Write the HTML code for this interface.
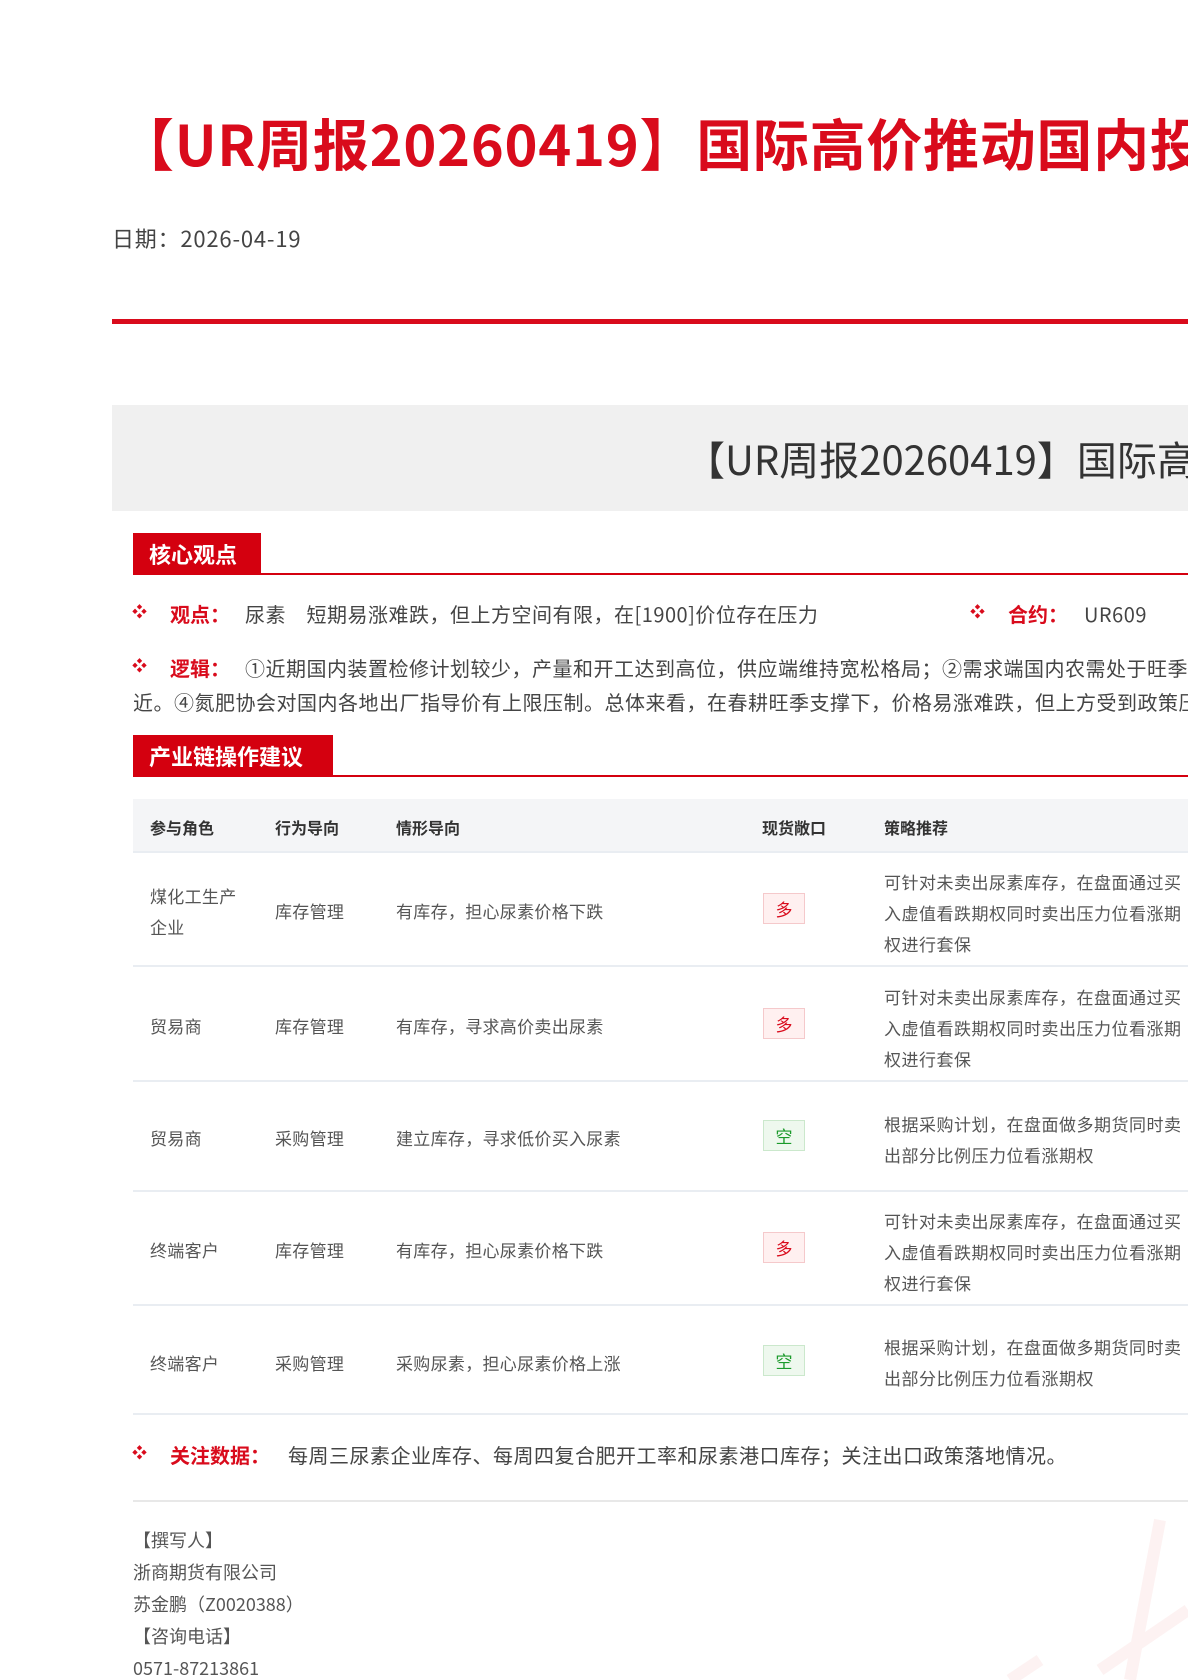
<!DOCTYPE html>
<html><head><meta charset="utf-8"><style>
*{margin:0;padding:0;box-sizing:border-box}
html,body{width:1188px;height:1680px;overflow:hidden;background:#fff}
body{position:relative;font-family:"Noto Sans CJK SC","Liberation Sans",sans-serif;color:#333}
.a{position:absolute;white-space:nowrap}
.red{color:#d90b1c}
.sec{position:absolute;left:133px;height:42px;background:#d4000f;color:#fff;font-weight:bold;font-size:22px;line-height:42px;padding-left:16px}
.secline{position:absolute;left:133px;right:0;height:2px;background:#d4000f}
.th{position:absolute;font-size:16px;font-weight:bold;color:#333;white-space:nowrap;line-height:18px}
.td{position:absolute;font-size:17px;color:#555;white-space:nowrap;line-height:20px;letter-spacing:0.3px}
.bd{position:absolute;left:133px;right:0;height:2px;background:#e9edf2}
.tag{position:absolute;left:763px;width:42px;height:31px;font-size:17px;text-align:center;line-height:29px}
.tr{background:#fff0f0;border:1px solid #f5c9cb;color:#d90b1c}
.tg{background:#eef8ee;border:1px solid #cbe8cc;color:#1a9a2a}
.st{position:absolute;left:884px;font-size:17px;color:#555;line-height:31px;width:300px;white-space:normal;word-break:break-all;letter-spacing:0.5px}
.bul{position:absolute;color:#d90b1c;font-size:15px;line-height:18px}
.lab{position:absolute;color:#d90b1c;font-weight:bold;font-size:20px;white-space:nowrap;line-height:23px}
.tx{position:absolute;font-size:20px;color:#444;white-space:nowrap;line-height:23px;letter-spacing:0.5px}
.w{position:absolute;left:133px;font-size:18px;color:#555;white-space:nowrap;line-height:21px}
</style></head><body>
<svg class="a" style="left:0;top:0" width="1188" height="1680"><g stroke="#fdf2f2" stroke-width="12" fill="none"><path d="M1160 1520 L1130 1680"/><path d="M1188 1610 L1100 1670"/><path d="M1040 1660 L1010 1680"/></g></svg>
<div class="a red" style="left:118px;top:108px;font-size:56px;font-weight:bold;line-height:70px;letter-spacing:0.7px">【UR周报20260419】国际高价推动国内投机情绪</div>
<div class="a" style="left:112px;top:223px;font-size:22px;color:#444;line-height:30px;letter-spacing:0.8px">日期：2026-04-19</div>
<div class="a" style="left:112px;top:319px;right:0;height:5px;background:#d90b1c"></div>
<div class="a" style="left:112px;top:405px;right:0;height:106px;background:#f0f0f0"></div>
<div class="a" style="left:685px;top:433px;font-size:40px;color:#333;line-height:50px">【UR周报20260419】国际高价推动国内投机情绪</div>

<div class="sec" style="top:533px;width:128px">核心观点</div>
<div class="secline" style="top:573px"></div>
<div class="bul" style="left:132px;top:603px">❖</div>
<div class="lab" style="left:170px;top:602px">观点：</div>
<div class="tx" style="left:245px;top:602px">尿素　短期易涨难跌，但上方空间有限，在[1900]价位存在压力</div>
<div class="bul" style="left:970px;top:603px">❖</div>
<div class="lab" style="left:1008px;top:602px">合约：</div>
<div class="tx" style="left:1084px;top:602px">UR609</div>
<div class="bul" style="left:132px;top:657px">❖</div>
<div class="lab" style="left:170px;top:656px">逻辑：</div>
<div class="tx" style="left:245px;top:656px">①近期国内装置检修计划较少，产量和开工达到高位，供应端维持宽松格局；②需求端国内农需处于旺季</div>
<div class="tx" style="left:133px;top:690px">近。④氮肥协会对国内各地出厂指导价有上限压制。总体来看，在春耕旺季支撑下，价格易涨难跌，但上方受到政策压制</div>

<div class="sec" style="top:735px;width:200px">产业链操作建议</div>
<div class="secline" style="top:775px"></div>

<div class="a" style="left:133px;top:799px;right:0;height:53px;background:#f4f5f7"></div>
<div class="bd" style="top:851px"></div>
<div class="th" style="left:150px;top:818px">参与角色</div>
<div class="th" style="left:275px;top:818px">行为导向</div>
<div class="th" style="left:396px;top:818px">情形导向</div>
<div class="th" style="left:762px;top:818px">现货敞口</div>
<div class="th" style="left:884px;top:818px">策略推荐</div>

<div class="td" style="left:150px;top:880px;line-height:31px;white-space:normal;width:100px">煤化工生产企业</div>
<div class="td" style="left:275px;top:901px">库存管理</div>
<div class="td" style="left:396px;top:901px">有库存，担心尿素价格下跌</div>
<div class="tag tr" style="top:893px">多</div>
<div class="st" style="top:866px">可针对未卖出尿素库存，在盘面通过买入虚值看跌期权同时卖出压力位看涨期权进行套保</div>
<div class="bd" style="top:965px"></div>

<div class="td" style="left:150px;top:1016px">贸易商</div>
<div class="td" style="left:275px;top:1016px">库存管理</div>
<div class="td" style="left:396px;top:1016px">有库存，寻求高价卖出尿素</div>
<div class="tag tr" style="top:1008px">多</div>
<div class="st" style="top:981px">可针对未卖出尿素库存，在盘面通过买入虚值看跌期权同时卖出压力位看涨期权进行套保</div>
<div class="bd" style="top:1080px"></div>

<div class="td" style="left:150px;top:1128px">贸易商</div>
<div class="td" style="left:275px;top:1128px">采购管理</div>
<div class="td" style="left:396px;top:1128px">建立库存，寻求低价买入尿素</div>
<div class="tag tg" style="top:1120px">空</div>
<div class="st" style="top:1108px">根据采购计划，在盘面做多期货同时卖出部分比例压力位看涨期权</div>
<div class="bd" style="top:1190px"></div>

<div class="td" style="left:150px;top:1240px">终端客户</div>
<div class="td" style="left:275px;top:1240px">库存管理</div>
<div class="td" style="left:396px;top:1240px">有库存，担心尿素价格下跌</div>
<div class="tag tr" style="top:1232px">多</div>
<div class="st" style="top:1205px">可针对未卖出尿素库存，在盘面通过买入虚值看跌期权同时卖出压力位看涨期权进行套保</div>
<div class="bd" style="top:1304px"></div>

<div class="td" style="left:150px;top:1353px">终端客户</div>
<div class="td" style="left:275px;top:1353px">采购管理</div>
<div class="td" style="left:396px;top:1353px">采购尿素，担心尿素价格上涨</div>
<div class="tag tg" style="top:1345px">空</div>
<div class="st" style="top:1331px">根据采购计划，在盘面做多期货同时卖出部分比例压力位看涨期权</div>
<div class="bd" style="top:1413px"></div>

<div class="bul" style="left:132px;top:1444px">❖</div>
<div class="lab" style="left:170px;top:1443px">关注数据：</div>
<div class="tx" style="left:288px;top:1443px">每周三尿素企业库存、每周四复合肥开工率和尿素港口库存；关注出口政策落地情况。</div>
<div class="a" style="left:133px;top:1500px;right:0;height:2px;background:#e8e8e8"></div>

<div class="w" style="top:1530px">【撰写人】</div>
<div class="w" style="top:1562px">浙商期货有限公司</div>
<div class="w" style="top:1594px">苏金鹏（Z0020388）</div>
<div class="w" style="top:1626px">【咨询电话】</div>
<div class="w" style="top:1658px">0571-87213861</div>
</body></html>
